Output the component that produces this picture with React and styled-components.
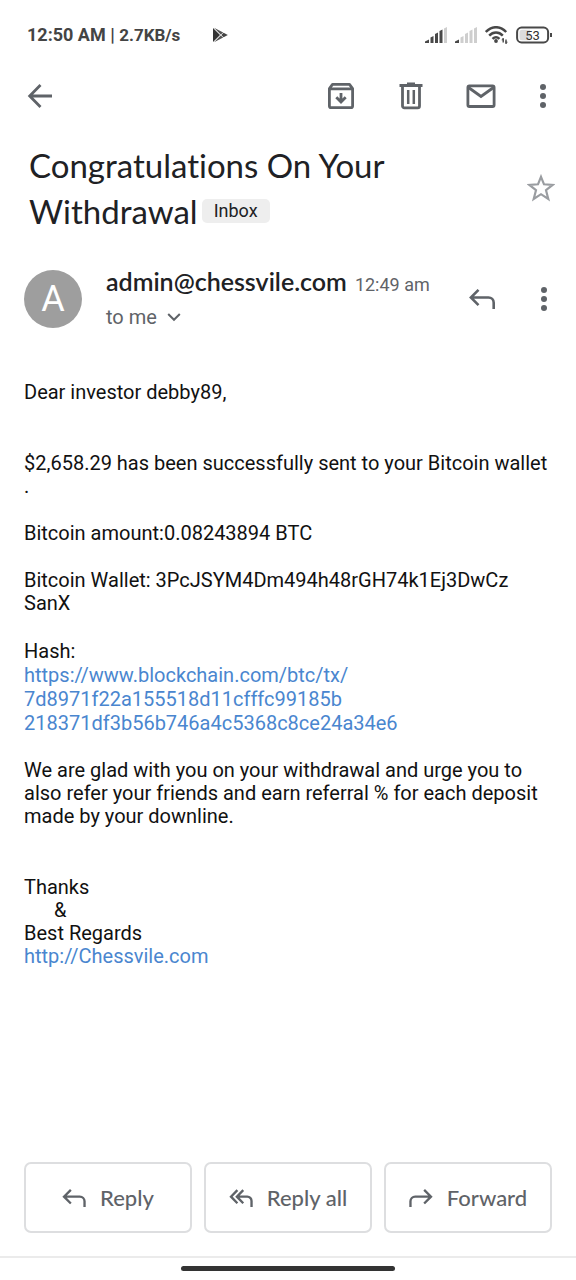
import React from "react";
import styled, { createGlobalStyle } from "styled-components";

const ink = "#202124";
const grey = "#5f6368";
const blue = "#4a86cf";
const display = `Lato, "Open Sans", sans-serif`;

const GlobalStyle = createGlobalStyle`
  *, *::before, *::after { box-sizing: border-box; }
  body { margin: 0; background: #fff; color: #111; font-family: Roboto, "Liberation Sans", sans-serif; font-variant-ligatures: none; }
  button { font: inherit; color: inherit; background: none; border: 0; padding: 0; cursor: pointer; }
  svg { display: block; flex: none; }
`;

const Screen = styled.div`
  min-height: 100vh;
  display: flex;
  flex-direction: column;
`;

const StatusBar = styled.div`
  display: flex;
  align-items: center;
  height: 68px;
  padding: 1px 24px 0 27px;
  color: #444;
`;

const Clock = styled.span`
  font-size: 18px;
  font-weight: 700;
  white-space: pre;
`;

const Speed = styled.span`
  font-size: 17px;
  font-weight: 700;
  margin-right: 32px;
`;

const StatusIcons = styled.div`
  display: flex;
  align-items: center;
  gap: 8px;
  margin-left: auto;
`;

const Toolbar = styled.header`
  display: flex;
  align-items: center;
  gap: 22px;
  height: 55px;
  padding: 0 17px 0 16px;
  color: ${grey};
`;

const IconButton = styled.button`
  display: flex;
  align-items: center;
  justify-content: center;
  width: ${(p) => (p.$narrow ? "32px" : "48px")};
  height: 48px;
  flex: none;
  color: ${(p) => p.$tone || grey};
`;

const Spacer = styled.div`
  flex: 1;
`;

const SubjectRow = styled.section`
  display: flex;
  align-items: center;
  justify-content: space-between;
  padding: 19px 19px 0 29px;
`;

const Subject = styled.h1`
  margin: 0;
  font-family: ${display};
  font-size: 33px;
  font-weight: 400;
  line-height: 46px;
  color: ${ink};
`;

const SubjectLine = styled.span`
  display: flex;
  align-items: center;
  gap: 4px;
`;

const Label = styled.span`
  padding: 0 12px;
  border-radius: 5px;
  background: #eee;
  font-family: Roboto, sans-serif;
  font-size: 18px;
  line-height: 24px;
`;

const SenderRow = styled.section`
  display: flex;
  align-items: center;
  padding: 33px 16px 0 24px;
`;

const Avatar = styled.div`
  display: flex;
  align-items: center;
  justify-content: center;
  width: 58px;
  height: 58px;
  margin-right: 24px;
  border-radius: 50%;
  background: #9e9e9e;
  color: #fff;
  font-size: 36px;
`;

const SenderText = styled.div`
  flex: 1;
  display: flex;
  flex-direction: column;
  gap: 4px;
  white-space: nowrap;
`;

const SenderLine = styled.div`
  display: flex;
  align-items: baseline;
  gap: 8px;
  line-height: 28px;
`;

const SenderName = styled.span`
  font-family: ${display};
  font-size: 25px;
  font-weight: 600;
  color: ${ink};
`;

const SentAt = styled.time`
  font-size: 18px;
  color: ${grey};
`;

const Recipients = styled.button`
  display: flex;
  align-items: center;
  gap: 10px;
  font-size: 20px;
  line-height: 28px;
  color: ${grey};
`;

const SenderActions = styled.div`
  display: flex;
  align-items: center;
  gap: 22px;
`;

const Message = styled.article`
  flex: 1;
  padding: 50px 24px 48px;
  font-size: 20px;
  line-height: 23px;
`;

const Paragraph = styled.p`
  margin: 0 0 ${(p) => (p.$wide ? "48px" : "24px")};
  line-height: ${(p) => (p.$loose ? "24px" : "23px")};
`;

const Link = styled.a`
  color: ${blue};
  text-decoration: none;
`;

const Indent = styled.span`
  padding-left: 30px;
`;

const Actions = styled.footer`
  display: grid;
  grid-template-columns: repeat(3, 1fr);
  gap: 12px;
  padding: 0 24px 23px;
`;

const ActionButton = styled.button`
  && {
    display: flex;
    align-items: center;
    justify-content: center;
    gap: 14px;
    height: 71px;
    border: 2px solid #dddee0;
    border-radius: 7px;
    font-family: ${display};
    font-size: 22px;
    font-weight: 500;
    color: ${grey};
    white-space: nowrap;
  }
`;

const NavBar = styled.div`
  height: 24px;
  padding-top: 8px;
  border-top: 2px solid #ebebeb;
`;

const HomeHandle = styled.div`
  width: 37%;
  height: 5px;
  margin: 0 auto;
  border-radius: 3px;
  background: #333;
`;

const PlayIcon = () => (
  <svg width="16" height="16" viewBox="0 0 16 16">
    <path d="M1 1 8 8 1 15Z" fill="#333" />
    <path d="M2 .8 11.200 5.400 8.700 7.400ZM2 15.200 11.200 10.600 8.700 8.600Z" fill="#555" />
    <path d="M11.600 5.800 15.800 8 11.600 10.200 9.300 8Z" fill="#444" />
  </svg>
);

const Signal = ({ level }) => (
  <svg width="22" height="16" viewBox="0 0 22 16">
    {[
      "M0 16V14.5L4 12.5V16Z",
      "M5.5 10.5 8.500 9V16H5.500Z",
      "M10 7 13 5.500V16H10Z",
      "M14.500 4 17.500 2.500V16H14.500Z",
      "M19 1.500 22 0V16H19Z",
    ].map((d, i) => (
      <path key={d} d={d} fill={i < level ? "#484848" : "#cecece"} />
    ))}
  </svg>
);

const WifiIcon = () => (
  <svg width="23" height="18" viewBox="0 0 23 18" fill="none" stroke="#484848" strokeWidth="2.500">
    <path d="M.8 6C7-.4 15-.4 21.200 6M4.200 9.600c4-4 9.600-4 13.600 0M7.500 12.900c2.200-2 4.800-2 7 0" />
    <circle cx="11" cy="15" r="1.900" fill="#484848" stroke="none" />
    <path d="M18.200 12.500V16.500M21 13.500V17.500" strokeWidth="1.400" />
    <path d="M16.800 14.200 18.200 12.200V15M22.400 15.800 21 17.800V15" strokeWidth=".8" />
  </svg>
);

const BatteryIcon = () => (
  <svg width="36" height="18" viewBox="0 0 36 18">
    <rect x="1.100" y="1.600" width="31" height="14.800" rx="4.500" fill="#fff" stroke="#484848" strokeWidth="2" />
    <path d="M6 3.700h8v10.600H6a2.500 2.500 0 0 1-2.500-2.500V6.200A2.500 2.500 0 0 1 6 3.700Z" fill="#dcdcdc" />
    <path d="M34 7h2v4h-2Z" fill="#484848" />
    <text x="16.500" y="13.500" textAnchor="middle" fontFamily="Roboto, sans-serif" fontSize="13" fill="#333">53</text>
  </svg>
);

const BackIcon = () => (
  <svg width="26" height="26" viewBox="0 0 26 26" fill="none" stroke="currentColor" strokeWidth="2.800">
    <path d="M25 13H3M13.500 2 2.700 13l10.800 11" />
  </svg>
);

const ArchiveIcon = () => (
  <svg width="28" height="28" viewBox="0 0 28 28" fill="none" stroke="currentColor" strokeWidth="2.800" strokeLinejoin="round">
    <path d="M2.400 6.500 5.500 2.400h17l3.100 4.100V24a1.700 1.700 0 0 1-1.700 1.700H4.100A1.700 1.700 0 0 1 2.400 24ZM2.400 6.900h23.200" />
    <path d="M14 11v8M9.300 15.300 14 20l4.700-4.700" strokeLinejoin="miter" />
  </svg>
);

const TrashIcon = () => (
  <svg width="24" height="28" viewBox="0 0 24 28" fill="none" stroke="currentColor" strokeWidth="2.800">
    <path d="M.5 3.500h23M8 2h8M3.500 4v20a1.800 1.800 0 0 0 1.800 1.800h13.400a1.800 1.800 0 0 0 1.800-1.800V4" />
    <path d="M9.200 8v14M14.800 8v14" strokeWidth="2.500" />
  </svg>
);

const MailIcon = () => (
  <svg width="30" height="24" viewBox="0 0 30 24" fill="none" stroke="currentColor" strokeWidth="2.800">
    <rect x="1.900" y="1.900" width="26.200" height="20.600" rx="1.500" />
    <path d="M2.500 3.500 15 12.500 27.500 3.500" />
  </svg>
);

const DotsIcon = () => (
  <svg width="8" height="26" viewBox="0 0 8 26" fill="currentColor">
    <circle cx="4" cy="4" r="3" />
    <circle cx="4" cy="13" r="3" />
    <circle cx="4" cy="22" r="3" />
  </svg>
);

const StarIcon = () => (
  <svg width="28" height="28" viewBox="0 0 28 28" fill="none" stroke="currentColor" strokeWidth="2.200">
    <path d="M14 2.800 17 10.300 25.600 10.900 19 16.200 21.300 25 14 20.200 6.700 25 9 16.200 2.400 10.900 11 10.300Z" />
  </svg>
);

const ReplyIcon = ({ size = 24, flip, all }) => (
  <svg
    width={size}
    height={size === 24 ? 18 : 20}
    viewBox="0 0 26 20"
    fill="none"
    stroke="currentColor"
    strokeWidth="2.600"
  >
    {all ? (
      <path d="M9 1.200 1.900 8.500 9 15.800M15.500 1.200 8.400 8.500l7.100 7.300M8.400 8.500H20a4.700 4.700 0 0 1 4.700 4.700V20" />
    ) : (
      <path
        d="M9.500 .9 1.900 8.500l7.600 7.600M1.900 8.500H19.500a5.200 5.200 0 0 1 5.200 5.200V20"
        transform={flip ? "translate(26 0) scale(-1 1)" : undefined}
      />
    )}
  </svg>
);

const ChevronIcon = () => (
  <svg width="14" height="10" viewBox="0 0 14 10" fill="none" stroke="currentColor" strokeWidth="2">
    <path d="M1.200 2 7 7.800 12.800 2" />
  </svg>
);

export default function App() {
  return (
    <>
      <GlobalStyle />
      <Screen>
        <StatusBar>
          <Clock>12:50 AM | </Clock>
          <Speed>2.7KB/s</Speed>
          <PlayIcon />
          <StatusIcons>
            <Signal level={4} />
            <Signal level={1} />
            <WifiIcon />
            <BatteryIcon />
          </StatusIcons>
        </StatusBar>

        <Toolbar>
          <IconButton aria-label="Back"><BackIcon /></IconButton>
          <Spacer />
          <IconButton aria-label="Archive"><ArchiveIcon /></IconButton>
          <IconButton aria-label="Delete"><TrashIcon /></IconButton>
          <IconButton aria-label="Mark as unread"><MailIcon /></IconButton>
          <IconButton $narrow aria-label="More options"><DotsIcon /></IconButton>
        </Toolbar>

        <SubjectRow>
          <Subject>
            <SubjectLine>Congratulations On Your</SubjectLine>
            <SubjectLine>
              <span>Withdrawal</span>
              <Label>Inbox</Label>
            </SubjectLine>
          </Subject>
          <IconButton $narrow $tone="#9a9da1" aria-label="Star"><StarIcon /></IconButton>
        </SubjectRow>

        <SenderRow>
          <Avatar>A</Avatar>
          <SenderText>
            <SenderLine>
              <SenderName>admin@chessvile.com</SenderName>
              <SentAt>12:49 am</SentAt>
            </SenderLine>
            <Recipients>
              to me <ChevronIcon />
            </Recipients>
          </SenderText>
          <SenderActions>
            <IconButton aria-label="Reply"><ReplyIcon size={26} /></IconButton>
            <IconButton $narrow aria-label="More message options"><DotsIcon /></IconButton>
          </SenderActions>
        </SenderRow>

        <Message>
          <Paragraph $wide>Dear investor debby89,</Paragraph>
          <Paragraph>
            $2,658.29 has been successfully sent to your Bitcoin wallet
            <br />.
          </Paragraph>
          <Paragraph>Bitcoin amount:0.08243894 BTC</Paragraph>
          <Paragraph>
            Bitcoin Wallet: 3PcJSYM4Dm494h48rGH74k1Ej3DwCz
            <br />
            SanX
          </Paragraph>
          <Paragraph $loose>
            Hash:
            <br />
            <Link href="https://www.blockchain.com/btc/tx/7d8971f22a155518d11cfffc99185b218371df3b56b746a4c5368c8ce24a34e6">
              https://www.blockchain.com/btc/tx/
              <br />
              7d8971f22a155518d11cfffc99185b
              <br />
              218371df3b56b746a4c5368c8ce24a34e6
            </Link>
          </Paragraph>
          <Paragraph $wide>
            We are glad with you on your withdrawal and urge you to also refer
            your friends and earn referral % for each deposit made by your
            downline.
          </Paragraph>
          <Paragraph>
            Thanks
            <br />
            <Indent>&amp;</Indent>
            <br />
            Best Regards
            <br />
            <Link href="http://Chessvile.com">http://Chessvile.com</Link>
          </Paragraph>
        </Message>

        <Actions>
          <ActionButton><ReplyIcon />Reply</ActionButton>
          <ActionButton><ReplyIcon all />Reply all</ActionButton>
          <ActionButton><ReplyIcon flip />Forward</ActionButton>
        </Actions>
        <NavBar>
          <HomeHandle />
        </NavBar>
      </Screen>
    </>
  );
}
